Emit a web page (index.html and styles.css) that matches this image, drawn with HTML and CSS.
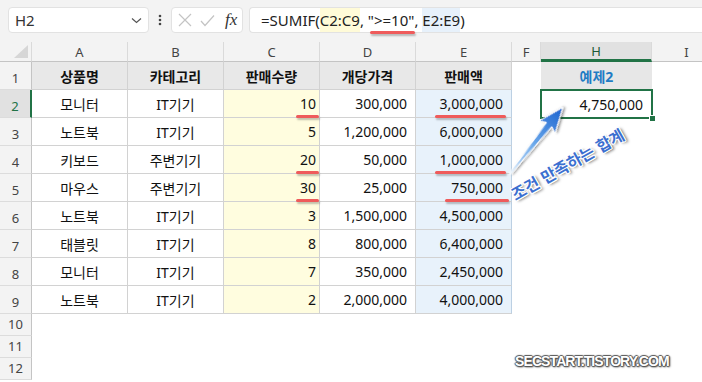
FILE: index.html
```html
<!DOCTYPE html>
<html lang="ko">
<head>
  <meta charset="UTF-8" />
  <title>SUMIF 예제</title>
  <link rel="stylesheet" href="styles.css">
</head>
<body>
  <div class="app">
    <div class="topbar">
      <div class="name-box">
        <span>H2</span>
        <svg width="11" height="7" viewBox="0 0 11 7"><polyline points="1,1.5 5.5,5.5 10,1.5" fill="none" stroke="#555" stroke-width="1.2"/></svg>
      </div>
      <div class="kebab">
        <svg width="4" height="12" viewBox="0 0 4 12"><circle cx="2" cy="2" r="1.3" fill="#444"/><circle cx="2" cy="6" r="1.3" fill="#444"/><circle cx="2" cy="10" r="1.3" fill="#444"/></svg>
      </div>
      <div class="fx-box">
        <svg width="14" height="14" viewBox="0 0 14 14"><path d="M1 1 L13 13 M13 1 L1 13" stroke="#c4c4c4" stroke-width="1.2" fill="none"/></svg>
        <svg width="15" height="13" viewBox="0 0 15 13"><polyline points="1,7 5,11.5 14,1.5" stroke="#c4c4c4" stroke-width="1.2" fill="none"/></svg>
        <span class="fx">fx</span>
      </div>
      <div class="formula">=SUMIF(<span class="ref ref-c">C2:C9</span>, <span class="crit">"&gt;=10"</span>, <span class="ref ref-e">E2:E9</span>)</div>
    </div>

    <div class="sheet">
      <div class="row hdr">
        <div class="cell w-rh colh corner">
          <svg width="14" height="13" viewBox="0 0 14 13"><polygon points="14,0 14,13 0,13" fill="#d6d6d6"/></svg>
        </div>
        <div class="cell w-col colh">A</div>
        <div class="cell w-col colh">B</div>
        <div class="cell w-col colh">C</div>
        <div class="cell w-col colh">D</div>
        <div class="cell w-col colh">E</div>
        <div class="cell w-f colh">F</div>
        <div class="cell w-h colh sel">H</div>
        <div class="cell w-i colh">I</div>
      </div>

      <div class="row">
        <div class="cell w-rh rowh">1</div>
        <div class="cell w-col t th">상품명</div>
        <div class="cell w-col t th">카테고리</div>
        <div class="cell w-col t th">판매수량</div>
        <div class="cell w-col t th">개당가격</div>
        <div class="cell w-col t th">판매액</div>
        <div class="cell w-f"></div>
        <div class="cell w-h label">예제2</div>
        <div class="cell w-i"></div>
      </div>

      <div class="row">
        <div class="cell w-rh rowh sel">2</div>
        <div class="cell w-col t">모니터</div>
        <div class="cell w-col t">IT기기</div>
        <div class="cell w-col t qty"><span class="mark">10</span></div>
        <div class="cell w-col t num">300,000</div>
        <div class="cell w-col t num amt"><span class="mark">3,000,000</span></div>
        <div class="cell w-f"></div>
        <div class="cell w-h active">4,750,000</div>
        <div class="cell w-i"></div>
      </div>

      <div class="row">
        <div class="cell w-rh rowh">3</div>
        <div class="cell w-col t">노트북</div>
        <div class="cell w-col t">IT기기</div>
        <div class="cell w-col t qty">5</div>
        <div class="cell w-col t num">1,200,000</div>
        <div class="cell w-col t num amt">6,000,000</div>
        <div class="cell w-f"></div>
        <div class="cell w-h"></div>
        <div class="cell w-i"></div>
      </div>

      <div class="row">
        <div class="cell w-rh rowh">4</div>
        <div class="cell w-col t">키보드</div>
        <div class="cell w-col t">주변기기</div>
        <div class="cell w-col t qty"><span class="mark">20</span></div>
        <div class="cell w-col t num">50,000</div>
        <div class="cell w-col t num amt"><span class="mark">1,000,000</span></div>
        <div class="cell w-f"></div>
        <div class="cell w-h"></div>
        <div class="cell w-i"></div>
      </div>

      <div class="row">
        <div class="cell w-rh rowh">5</div>
        <div class="cell w-col t">마우스</div>
        <div class="cell w-col t">주변기기</div>
        <div class="cell w-col t qty"><span class="mark">30</span></div>
        <div class="cell w-col t num">25,000</div>
        <div class="cell w-col t num amt"><span class="mark wide">750,000</span></div>
        <div class="cell w-f"></div>
        <div class="cell w-h"></div>
        <div class="cell w-i"></div>
      </div>

      <div class="row">
        <div class="cell w-rh rowh">6</div>
        <div class="cell w-col t">노트북</div>
        <div class="cell w-col t">IT기기</div>
        <div class="cell w-col t qty">3</div>
        <div class="cell w-col t num">1,500,000</div>
        <div class="cell w-col t num amt">4,500,000</div>
        <div class="cell w-f"></div>
        <div class="cell w-h"></div>
        <div class="cell w-i"></div>
      </div>

      <div class="row">
        <div class="cell w-rh rowh">7</div>
        <div class="cell w-col t">태블릿</div>
        <div class="cell w-col t">IT기기</div>
        <div class="cell w-col t qty">8</div>
        <div class="cell w-col t num">800,000</div>
        <div class="cell w-col t num amt">6,400,000</div>
        <div class="cell w-f"></div>
        <div class="cell w-h"></div>
        <div class="cell w-i"></div>
      </div>

      <div class="row">
        <div class="cell w-rh rowh">8</div>
        <div class="cell w-col t">모니터</div>
        <div class="cell w-col t">IT기기</div>
        <div class="cell w-col t qty">7</div>
        <div class="cell w-col t num">350,000</div>
        <div class="cell w-col t num amt">2,450,000</div>
        <div class="cell w-f"></div>
        <div class="cell w-h"></div>
        <div class="cell w-i"></div>
      </div>

      <div class="row">
        <div class="cell w-rh rowh">9</div>
        <div class="cell w-col t">노트북</div>
        <div class="cell w-col t">IT기기</div>
        <div class="cell w-col t qty">2</div>
        <div class="cell w-col t num">2,000,000</div>
        <div class="cell w-col t num amt">4,000,000</div>
        <div class="cell w-f"></div>
        <div class="cell w-h"></div>
        <div class="cell w-i"></div>
      </div>

      <div class="row short"><div class="cell w-rh rowh">10</div></div>
      <div class="row short"><div class="cell w-rh rowh">11</div></div>
      <div class="row short"><div class="cell w-rh rowh">12</div></div>
    </div>

    <!-- annotation: arrow + note -->
    <svg class="arrow" width="85" height="95" viewBox="0 0 85 95">
      <defs>
        <linearGradient id="arrowFill" gradientUnits="userSpaceOnUse" x1="0" y1="0" x2="85" y2="0">
          <stop offset="0" stop-color="#d2e6fa"/>
          <stop offset="0.45" stop-color="#6aa8ea"/>
          <stop offset="1" stop-color="#1a62cf"/>
        </linearGradient>
        <filter id="arrowShadow" x="-20%" y="-20%" width="140%" height="140%">
          <feDropShadow dx="1.5" dy="1.5" stdDeviation="1.2" flood-color="#000" flood-opacity="0.45"/>
        </filter>
      </defs>
      <g transform="translate(15 79) rotate(-51.6)" filter="url(#arrowShadow)">
        <polygon points="0,-0.8 63,-3.4 60,-10 85,0 60,10 63,3.4 0,0.8" fill="url(#arrowFill)" stroke="#fff" stroke-width="1" stroke-linejoin="round"/>
      </g>
    </svg>
    <span class="note">조건 만족하는 합계</span>

    <span class="watermark">SECSTART.TISTORY.COM</span>
  </div>
</body>
</html>
```

FILE: styles.css
```css
body {
  margin: 0;
  font-family: "Noto Sans", "Noto Sans CJK KR", sans-serif;
  background-color: #ffffff;
  color: #111;
}

.app {
  position: relative;
  width: 702px;
  height: 382px;
  overflow: hidden;
}

/* formula bar */
.topbar {
  display: flex;
  align-items: flex-start;
  height: 42px;
  padding: 7px 0 0 8px;
  box-sizing: border-box;
  background-color: #f3f3f3;
}

.topbar > * {
  flex: none;
}

.name-box {
  width: 141px;
  height: 26px;
  box-sizing: border-box;
  display: flex;
  align-items: center;
  justify-content: space-between;
  padding: 0 6px 0 6px;
  background-color: #fff;
  border: 1px solid #e2e2e2;
  border-radius: 4px;
  font-size: 15px;
  color: #333;
}

.kebab {
  width: 22px;
  height: 26px;
  display: flex;
  align-items: center;
  justify-content: center;
}

.fx-box {
  width: 72px;
  height: 26px;
  box-sizing: border-box;
  display: flex;
  align-items: center;
  gap: 8px;
  padding: 0 4px 0 6px;
  background-color: #fff;
  border: 1px solid #e2e2e2;
  border-radius: 4px;
}

.fx {
  font-family: "Liberation Serif", serif;
  font-style: italic;
  font-size: 17px;
  color: #333;
  margin-left: 2px;
}

.formula {
  width: 470px;
  height: 26px;
  margin-left: 6px;
  box-sizing: border-box;
  padding-left: 11px;
  background-color: #fff;
  border: 1px solid #e2e2e2;
  border-right: none;
  border-radius: 4px 0 0 4px;
  font-size: 15px;
  line-height: 24px;
  white-space: pre;
  color: #222;
}

.ref {
  display: inline-block;
}

.ref-c {
  background-color: #fffbd8;
}

.ref-e {
  background-color: #e7f1fb;
}

.crit {
  display: inline-block;
  position: relative;
}

.crit::after {
  content: "";
  position: absolute;
  left: 2px;
  right: -1px;
  bottom: -2px;
  height: 3px;
  border-radius: 2px;
  background-color: #ef5b5b;
  box-shadow: 1px 2px 2px rgba(0,0,0,0.25);
}

/* grid */
.row {
  display: flex;
  height: 28px;
}

.row.hdr {
  height: 20px;
}

.row.short {
  height: 22px;
}

.cell {
  flex: none;
  box-sizing: border-box;
  display: flex;
  align-items: center;
  justify-content: center;
  font-size: 14px;
}

.w-rh { width: 32px; }
.w-col { width: 96px; }
.w-f { width: 29px; }
.w-h { width: 111px; }
.w-i { width: 70px; }

.colh {
  background-color: #f3f3f3;
  border-right: 1px solid #dadada;
  border-bottom: 1px solid #c4c4c4;
  color: #444;
  font-size: 13px;
}

.colh.corner {
  justify-content: flex-end;
  align-items: flex-end;
  padding: 0 3px 3px 0;
}

.colh.sel {
  background-color: #e1e1e1;
  border-bottom: 3px solid #217346;
  color: #1d5a35;
}

.rowh {
  background-color: #f3f3f3;
  border-right: 1px solid #c4c4c4;
  border-bottom: 1px solid #dcdcdc;
  color: #444;
  font-size: 13px;
  align-items: flex-end;
  padding-bottom: 2px;
}

.rowh.sel {
  background-color: #e1e1e1;
  border-right: 2px solid #217346;
  color: #217346;
}

.t {
  border-right: 1px solid #d2d2d2;
  border-bottom: 1px solid #d2d2d2;
}

.th {
  background-color: #e8e8e8;
  font-weight: bold;
}

.qty {
  background-color: #fffddf;
  justify-content: flex-end;
  padding-right: 3px;
}

.num {
  justify-content: flex-end;
  padding-right: 8px;
}

.amt {
  background-color: #e8f2fb;
  border-right-color: #bcd0e3;
}

.label {
  background-color: #e7e7e7;
  color: #1f7cc4;
  font-weight: bold;
}

.active {
  position: relative;
  justify-content: flex-end;
  padding-right: 9px;
  outline: 2px solid #217346;
  outline-offset: -1px;
}

.active::after {
  content: "";
  position: absolute;
  right: -4px;
  bottom: -4px;
  width: 5px;
  height: 5px;
  background-color: #217346;
  border: 1px solid #fff;
}

.mark {
  position: relative;
}

.mark::after {
  content: "";
  position: absolute;
  left: -4px;
  right: -3px;
  bottom: -5px;
  height: 3px;
  border-radius: 2px;
  background-color: #ef5b5b;
  box-shadow: 1px 2px 2px rgba(0,0,0,0.25);
}

.mark.wide::after {
  left: -6px;
  right: -6px;
}

/* overlays */
.arrow {
  position: absolute;
  left: 495px;
  top: 95px;
}

.note {
  position: absolute;
  left: 511px;
  top: 181px;
  line-height: 20px;
  font-family: "Noto Sans CJK KR", sans-serif;
  font-size: 16px;
  font-weight: bold;
  color: #3b6fd0;
  white-space: nowrap;
  transform-origin: 8px 10px;
  transform: rotate(-29.5deg);
  text-shadow:
    1px 0 0 #fff, -1px 0 0 #fff, 0 1px 0 #fff, 0 -1px 0 #fff,
    1px 1px 0 #fff, -1px -1px 0 #fff, 1px -1px 0 #fff, -1px 1px 0 #fff,
    2px 2px 3px rgba(0,0,0,0.65);
}

.watermark {
  position: absolute;
  left: 515px;
  top: 353px;
  line-height: 16px;
  font-family: "Liberation Sans", sans-serif;
  font-size: 14px;
  font-weight: bold;
  letter-spacing: -0.9px;
  color: #fff;
  text-shadow:
    1px 0 1px #555, -1px 0 1px #555, 0 1px 1px #555, 0 -1px 1px #555,
    1px 1px 2px #333;
}
```
